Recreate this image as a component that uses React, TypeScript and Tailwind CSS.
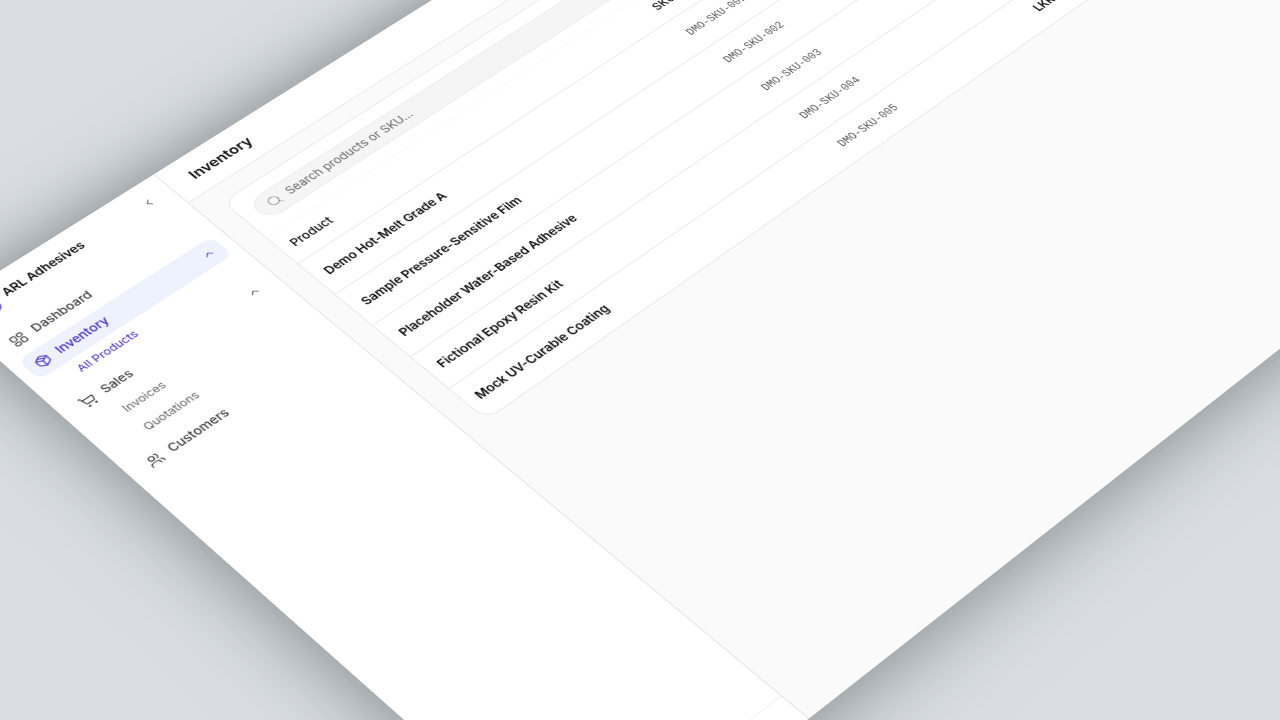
import React, { useState } from 'react';
import {
  ChevronDown,
  ChevronLeft,
  ChevronUp,
  Package,
  Search,
  ShoppingCart,
  Users
} from 'lucide-react';

type IconProps = { className?: string; strokeWidth?: number };

type NavItem = {
  label: string;
  icon: React.ComponentType<IconProps>;
  children?: string[];
};

function DashboardIcon({ className, strokeWidth = 1.5 }: IconProps) {
  return (
    <svg viewBox="0 0 24 24" fill="none" stroke="currentColor" strokeWidth={strokeWidth} className={className}>
      <rect x="2.5" y="2.5" width="8" height="9.5" rx="2.5" />
      <rect x="14" y="2.5" width="7.5" height="6.5" rx="2.5" />
      <rect x="2.5" y="15.5" width="8" height="6" rx="2.5" />
      <rect x="14" y="12.5" width="7.5" height="9" rx="2.5" />
    </svg>
  );
}

const NAV_ITEMS: NavItem[] = [
  { label: 'Dashboard', icon: DashboardIcon },
  { label: 'Inventory', icon: Package, children: ['All Products'] },
  { label: 'Sales', icon: ShoppingCart, children: ['Invoices', 'Quotations'] },
  { label: 'Customers', icon: Users }
];

const PRODUCTS = [
  { name: 'Demo Hot-Melt Grade A', sku: 'DMO-SKU-001', price: 'LKR 1,250.00' },
  { name: 'Sample Pressure-Sensitive Film', sku: 'DMO-SKU-002', price: 'LKR 3,400.00' },
  { name: 'Placeholder Water-Based Adhesive', sku: 'DMO-SKU-003', price: 'LKR 2,100.00' },
  { name: 'Fictional Epoxy Resin Kit', sku: 'DMO-SKU-004', price: 'LKR 5,800.00' },
  { name: 'Mock UV-Curable Coating', sku: 'DMO-SKU-005', price: 'LKR 4,650.00' }
];

function Sidebar() {
  const [open, setOpen] = useState<Record<string, boolean>>({ Inventory: true, Sales: true });

  const toggle = (label: string) => {
    setOpen(prev => ({ ...prev, [label]: !prev[label] }));
  };

  return (
    <aside className="w-64 shrink-0 flex flex-col bg-white border-r border-[#e4e4e4]">
      <div className="h-[52px] flex items-center gap-[10px] px-4">
        <div className="w-7 h-7 rounded-lg bg-[#4f39e0]" />
        <span className="text-[13px] font-semibold text-[#0a0a0a]">ARL Adhesives</span>
        <button aria-label="Collapse sidebar" className="ml-auto p-1 text-[#333333]">
          <ChevronLeft className="w-3.5 h-3.5" strokeWidth={1.75} />
        </button>
      </div>

      <nav className="flex-1 flex flex-col gap-1 p-3">
        {NAV_ITEMS.map(({ label, icon: Icon, children }) => {
          const active = label === 'Inventory';
          const Chevron = open[label] ? ChevronUp : ChevronDown;
          return (
            <div key={label}>
              <button
                onClick={() => toggle(label)}
                className={`w-full h-8 flex items-center gap-[9px] px-[9px] rounded-[10px] text-[13px] font-medium ${
                  active ? 'bg-[#eef1fe] text-[#4328d0]' : 'text-[#3c3c3c]'
                }`}
              >
                <Icon className="w-4 h-4" strokeWidth={1.75} />
                <span>{label}</span>
                {children && <Chevron className="w-3.5 h-3.5 ml-auto" strokeWidth={1.75} />}
              </button>
              {children && open[label] && (
                <div className="flex flex-col">
                  {children.map(child => (
                    <a
                      key={child}
                      href="#"
                      className={`h-[30px] flex items-center pl-[34px] text-xs ${
                        child === 'All Products' ? 'text-[#4328d0]' : 'text-[#666666]'
                      }`}
                    >
                      {child}
                    </a>
                  ))}
                </div>
              )}
            </div>
          );
        })}
      </nav>

      <div className="h-[34px] border-t border-[#f3f3f3]" />
    </aside>
  );
}

function ProductTable() {
  const [query, setQuery] = useState('');
  const rows = PRODUCTS.filter(p => `${p.name} ${p.sku}`.toLowerCase().includes(query.toLowerCase()));

  return (
    <section className="bg-white border border-[#e8e8e8] rounded-2xl overflow-hidden">
      <div className="p-4 border-b border-[#f8f8f8]">
        <label className="h-8 flex items-center gap-2 px-3 rounded-full bg-[#f5f5f5] border border-[#ececec]">
          <Search className="w-4 h-4 text-[#858585]" strokeWidth={1.5} />
          <input
            type="text"
            aria-label="Search products"
            value={query}
            onChange={(e) => setQuery(e.target.value)}
            placeholder="Search products or SKU..."
            className="flex-1 bg-transparent outline-none text-[13px] placeholder:text-[#666666]"
          />
        </label>
      </div>

      <table className="w-full table-fixed text-left text-[13px] text-[#0a0a0a]">
        <colgroup>
          <col className="w-[477px]" />
          <col className="w-[282px]" />
          <col />
        </colgroup>
        <thead>
          <tr className="h-11 border-b border-[#e8e8e8]">
            <th className="px-3 font-medium">Product</th>
            <th className="px-3 font-medium">SKU</th>
            <th className="px-3 font-medium">Price</th>
          </tr>
        </thead>
        <tbody>
          {rows.map(p => (
            <tr key={p.sku} className="h-[53px] border-b border-[#e8e8e8] last:h-[51px] last:border-b-0">
              <td className="px-3 font-semibold">{p.name}</td>
              <td className="px-3 font-['Liberation_Mono',monospace] text-xs text-[#555555]">{p.sku}</td>
              <td className="px-3 font-semibold">{p.price}</td>
            </tr>
          ))}
        </tbody>
      </table>
    </section>
  );
}

function App() {
  return (
    <div className="h-screen overflow-hidden bg-[#dadee3] font-['Inter',sans-serif]">
      {/* App window, laid flat and tilted away from the viewer */}
      <div className="w-[1440px] h-[883px] flex origin-top-left [transform:matrix3d(0.8539,-0.5016,0,0.0001248,0.66625,0.5479,0,-0.00012275,0,0,1,0,-59.4,308,0,1)] shadow-[0_0_80px_rgba(25,38,38,0.52)]">
        <Sidebar />
        <div className="flex-1 flex flex-col bg-[#fafafa]">
          <header className="h-[52px] flex items-center px-6 bg-white border-b border-[#e8e8e8]">
            <h1 className="text-base font-semibold text-[#0a0a0a]">Inventory</h1>
          </header>
          <main className="px-6 py-5">
            <ProductTable />
          </main>
        </div>
      </div>
    </div>
  );
}

export default App;
